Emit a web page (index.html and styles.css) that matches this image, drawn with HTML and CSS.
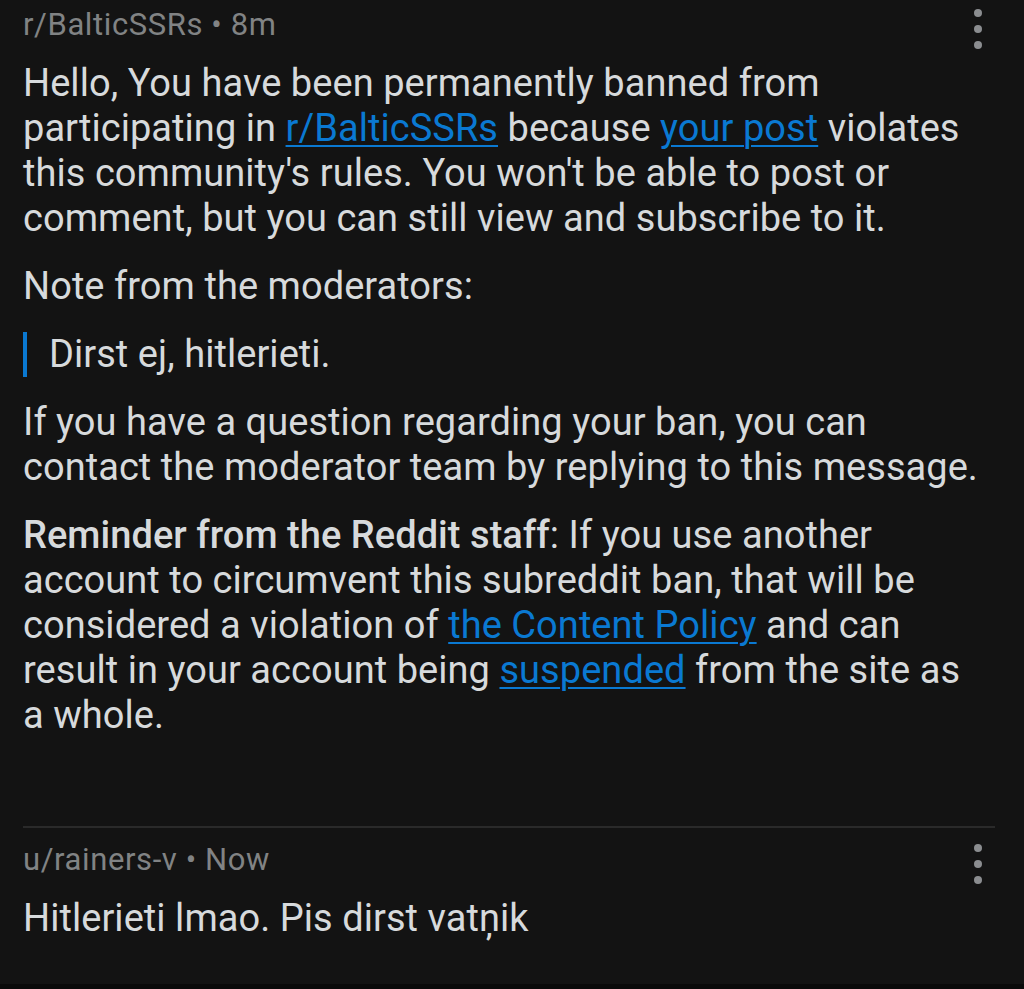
FILE: index.html
```html
<!DOCTYPE html>
<html lang="en">
<head>
<meta charset="utf-8">
<title>Messages</title>
<link rel="stylesheet" href="styles.css">
</head>
<body>
<main class="thread">
  <article class="comment comment-first">
    <div class="comment-head">
      <span class="meta">r/BalticSSRs • 8m</span>
      <svg class="kebab" width="34" height="52" viewBox="0 0 34 52" aria-hidden="true">
        <circle cx="17" cy="13" r="4"/>
        <circle cx="17" cy="29" r="4"/>
        <circle cx="17" cy="45" r="4"/>
      </svg>
    </div>
    <div class="comment-body">
      <p>Hello, You have been permanently banned from<br>participating in <a href="#">r/BalticSSRs</a> because <a href="#">your post</a> violates<br>this community's rules. You won't be able to post or<br>comment, but you can still view and subscribe to it.</p>
      <p>Note from the moderators:</p>
      <blockquote>Dirst ej, hitlerieti.</blockquote>
      <p>If you have a question regarding your ban, you can<br>contact the moderator team by replying to this message.</p>
      <p><strong>Reminder from the Reddit staff</strong>: If you use another<br>account to circumvent this subreddit ban, that will be<br>considered a violation of <a href="#">the Content Policy</a> and can<br>result in your account being <a href="#">suspended</a> from the site as<br>a whole.</p>
    </div>
  </article>
  <article class="comment comment-reply">
    <div class="comment-head">
      <span class="meta">u/rainers-v • Now</span>
      <svg class="kebab" width="34" height="52" viewBox="0 0 34 52" aria-hidden="true">
        <circle cx="17" cy="13" r="4"/>
        <circle cx="17" cy="29" r="4"/>
        <circle cx="17" cy="45" r="4"/>
      </svg>
    </div>
    <div class="comment-body">
      <p>Hitlerieti lmao. Pis dirst vatņik</p>
    </div>
  </article>
</main>
</body>
</html>
```

FILE: styles.css
```css
html, body {
  margin: 0;
  padding: 0;
}

body {
  background: #0a0a0a;
  font-family: Roboto, "Noto Sans", "Liberation Sans", sans-serif;
  color: #d7dadc;
}

.thread {
  background: #131313;
  height: 984px;
  padding: 0 29px 0 23px;
  box-sizing: border-box;
}

.comment-first {
  padding-bottom: 88px;
}

.comment-reply {
  border-top: 2px solid #2a2a2a;
  padding-top: 7px;
}

.comment-head {
  display: flex;
  align-items: flex-start;
  justify-content: space-between;
}

.meta {
  padding-top: 7px;
  font-size: 31px;
  line-height: 36px;
  letter-spacing: 0.6px;
  color: #818384;
}

.kebab {
  display: block;
  fill: #8b8d90;
}

.comment-body {
  margin-top: 9px;
  font-size: 38px;
  line-height: 45px;
  letter-spacing: 0.05px;
}

.comment-body p {
  margin: 0 0 23px;
}

.comment-body p:last-child {
  margin-bottom: 0;
}

.comment-body a {
  color: #0a79d2;
  text-decoration: underline;
  text-decoration-thickness: 2px;
  text-underline-offset: 4px;
}

.comment-body strong {
  font-weight: 500;
}

blockquote {
  margin: 0 0 23px;
  border-left: 4px solid #0a79d2;
  padding-left: 22px;
}
```
